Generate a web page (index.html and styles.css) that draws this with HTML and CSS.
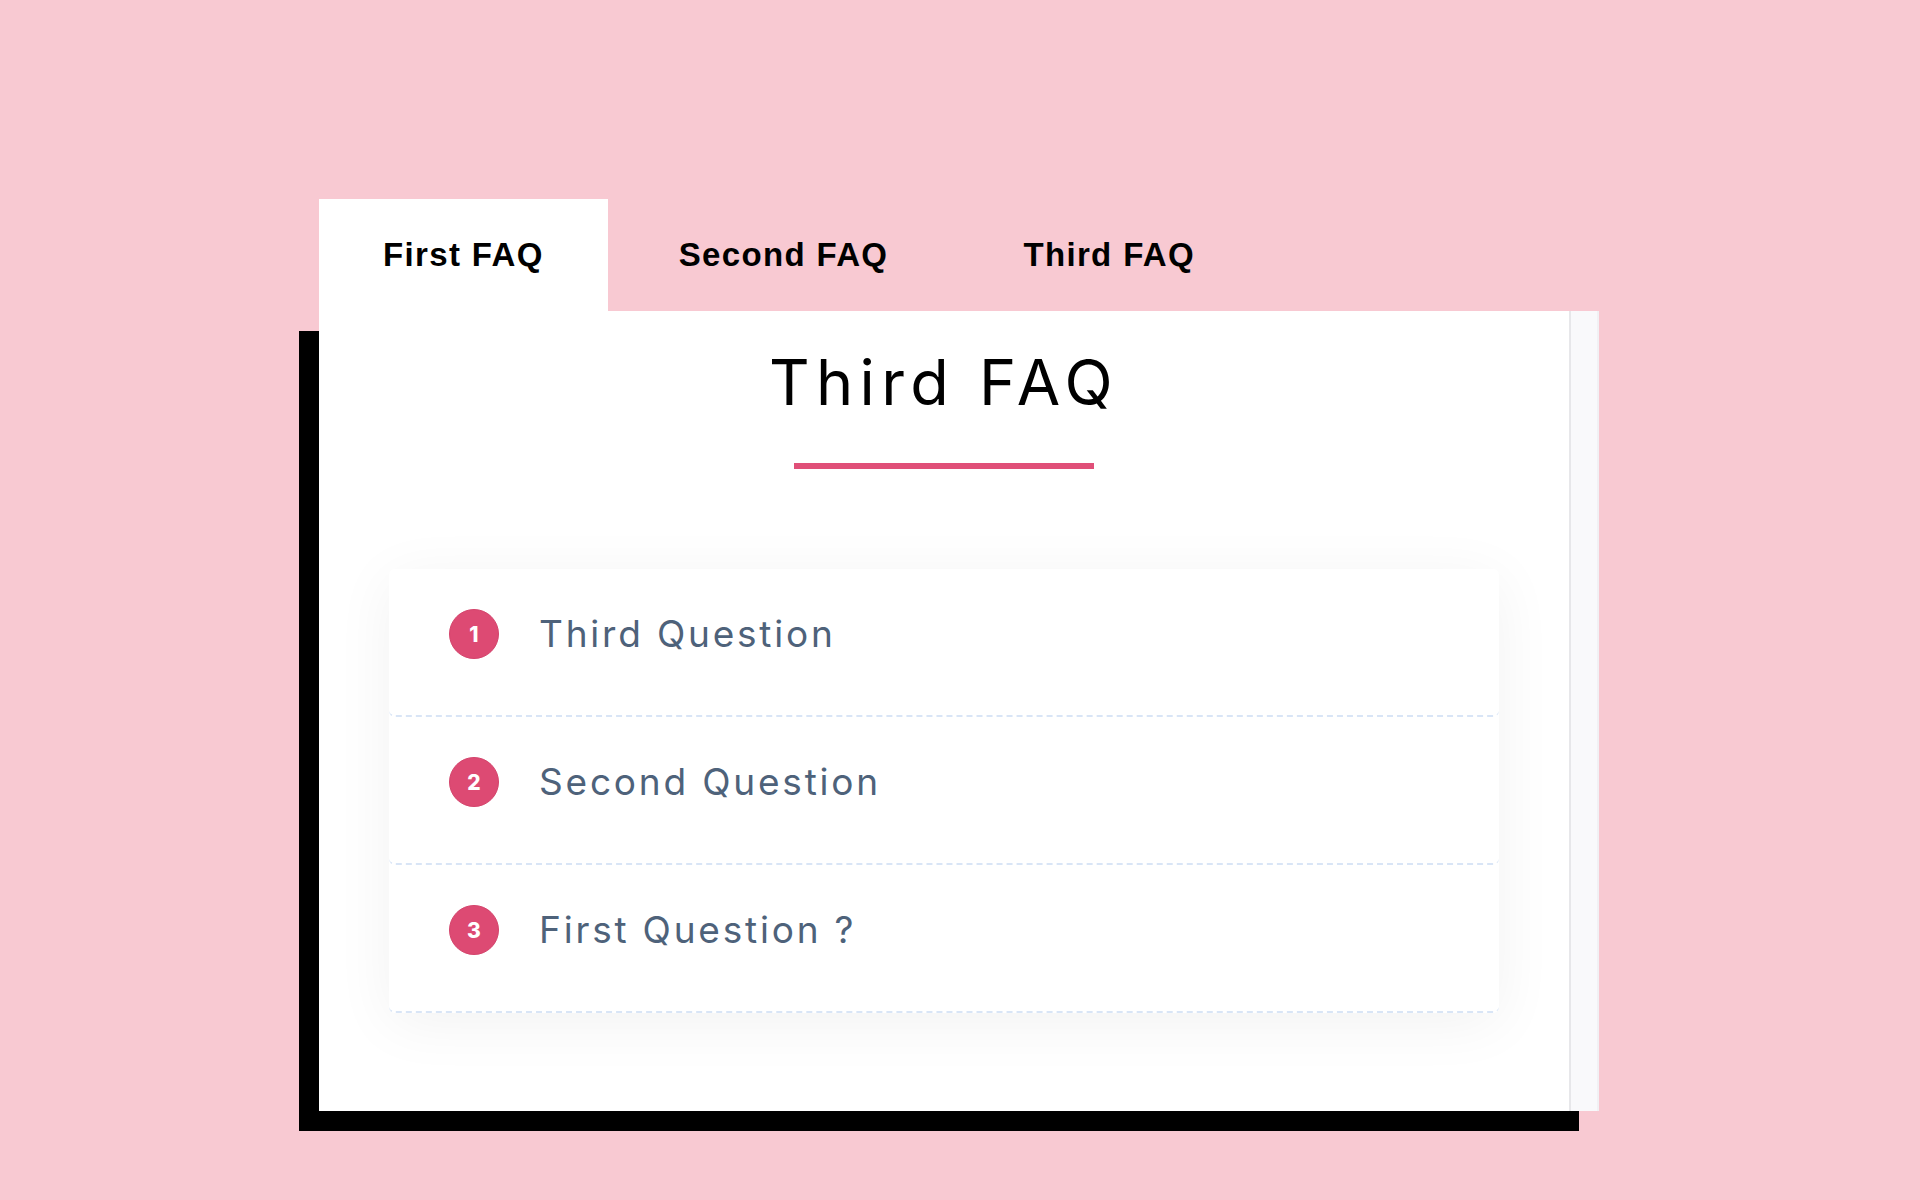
FILE: index.html
```html
<!DOCTYPE html>
<html lang="en">
<head>
<meta charset="utf-8">
<title>FAQ</title>
<link rel="stylesheet" href="styles.css">
</head>
<body>
<div class="stage">
  <div class="tabs">
    <div class="tab tab-active"><span class="tab-label">First FAQ</span></div>
    <div class="tab"><span class="tab-label">Second FAQ</span></div>
    <div class="tab"><span class="tab-label">Third FAQ</span></div>
  </div>
  <div class="panel">
    <div class="panel-content">
      <h1 class="faq-title">Third FAQ</h1>
      <div class="faq-rule"></div>
      <div class="faq-list">
        <div class="faq-item">
          <span class="faq-num">1</span>
          <span class="faq-question">Third Question</span>
        </div>
        <div class="faq-item">
          <span class="faq-num">2</span>
          <span class="faq-question">Second Question</span>
        </div>
        <div class="faq-item">
          <span class="faq-num">3</span>
          <span class="faq-question">First Question ?</span>
        </div>
      </div>
    </div>
    <div class="panel-gutter"></div>
  </div>
</div>
</body>
</html>
```
FILE: styles.css
```css
html, body {
  margin: 0;
  padding: 0;
}
body {
  background: #f8c9d2;
  font-family: "Liberation Sans", Arial, sans-serif;
  min-height: 1200px;
}
.stage {
  padding: 199px 0 0 319px;
}
.tabs {
  display: flex;
  gap: 7px;
  height: 112px;
}
.tab {
  display: flex;
  align-items: center;
  justify-content: center;
  box-sizing: border-box;
  padding: 0 64px;
  height: 112px;
}
.tab-active {
  background: #ffffff;
}
.tab-label {
  font-family: "Liberation Sans", Arial, sans-serif;
  font-weight: 700;
  font-size: 33px;
  letter-spacing: 1.35px;
  color: #000;
  white-space: nowrap;
}
.panel {
  width: 1280px;
  height: 800px;
  background: #ffffff;
  box-shadow: -20px 20px 0 #000;
  display: flex;
}
.panel-content {
  flex: 1;
  display: flex;
  flex-direction: column;
  align-items: center;
}
.panel-gutter {
  width: 30px;
  box-sizing: border-box;
  background: #f9f9fb;
  border-left: 2px solid #e7e7ea;
  border-right: 2px solid #f1f1f4;
}
.faq-title {
  margin: 40px 0 0;
  font-family: Inter, "Noto Sans", sans-serif;
  font-weight: 400;
  font-size: 63px;
  line-height: 1;
  letter-spacing: 6.3px;
  color: #000;
}
.faq-rule {
  width: 300px;
  height: 6px;
  margin-top: 49px;
  background: #e04f78;
}
.faq-list {
  margin-top: 100px;
  width: 1110px;
  background: #fff;
  border-radius: 6px;
  box-shadow: 0 10px 60px rgba(0, 0, 0, 0.055);
}
.faq-item {
  box-sizing: border-box;
  height: 148px;
  padding: 40px 0 0 60px;
  display: flex;
  align-items: flex-start;
  gap: 40px;
  border-radius: 6px;
  border-bottom: 2px dashed #d9e5f6;
}
.faq-num {
  width: 50px;
  height: 50px;
  flex: none;
  border-radius: 50%;
  box-sizing: border-box;
  border: 1px solid #d4446c;
  background: #dd4a73;
  color: #fff;
  font-family: Inter, "Noto Sans", sans-serif;
  font-weight: 800;
  font-size: 21px;
  display: flex;
  align-items: center;
  justify-content: center;
}
.faq-question {
  font-family: Inter, "Noto Sans", sans-serif;
  font-weight: 400;
  font-size: 37px;
  line-height: 50px;
  letter-spacing: 2.8px;
  color: #4e627a;
  white-space: nowrap;
}
```
